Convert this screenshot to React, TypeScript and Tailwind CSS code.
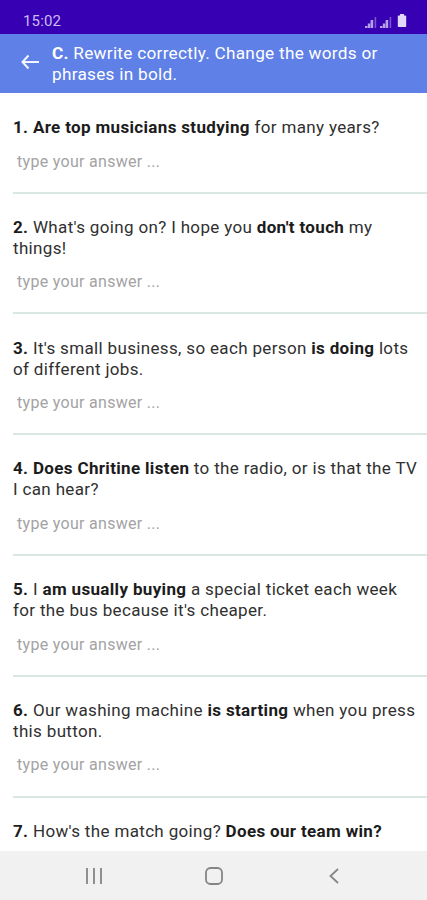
import type { ReactNode } from "react";

const questions: { id: number; lines: ReactNode[] }[] = [
  { id: 1, lines: [<><b className="font-bold">Are top musicians studying</b> for many years?</>] },
  { id: 2, lines: [<>What's going on? I hope you <b className="font-bold">don't touch</b> my</>, "things!"] },
  { id: 3, lines: [<>It's small business, so each person <b className="font-bold">is doing</b> lots</>, "of different jobs."] },
  { id: 4, lines: [<><b className="font-bold">Does Chritine listen</b> to the radio, or is that the TV</>, "I can hear?"] },
  { id: 5, lines: [<>I <b className="font-bold">am usually buying</b> a special ticket each week</>, "for the bus because it's cheaper."] },
  { id: 6, lines: [<>Our washing machine <b className="font-bold">is starting</b> when you press</>, "this button."] },
  { id: 7, lines: [<>How's the match going? <b className="font-bold">Does our team win?</b></>] },
];

function Signal() {
  return (
    <svg width="12" height="12" viewBox="0 0 12 12" fill="#cdbcf3">
      <path d="M0 10h2.4v2H0zM2.8 7.5h2.4V12H2.8zM5.6 4h2.6v8H5.6z" opacity=".85" />
      <path d="M9.6 1h1.6v11H9.6z" opacity=".45" />
    </svg>
  );
}

function StatusBar() {
  return (
    <div className="flex h-[34px] shrink-0 items-center justify-between bg-[#3700b3] pl-[23px] pr-5 pt-2 text-[#cdbcf3]">
      <span className="text-[15px] leading-5 tracking-[0.15px]">15:02</span>
      <div className="flex items-end gap-[3px]">
        <Signal />
        <Signal />
        <svg width="10" height="14" viewBox="0 0 10 14" className="ml-[2px]" fill="#e2d8fa">
          <path d="M3 0h4v1.5h1.4q.8 0 .8.8v10q0 .8-.8.8H1.6q-.8 0-.8-.8v-10q0-.8.8-.8H3z" />
        </svg>
      </div>
    </div>
  );
}

function Header() {
  return (
    <header className="flex h-[59px] shrink-0 items-center bg-[#5f80e6] pl-[21px] text-white">
      <svg width="19" height="16" viewBox="0 0 19 16" fill="none" stroke="#f3f5ff" strokeWidth="2" className="mb-[3px]">
        <path d="M18 8H1.5M7.5 1.5 1.5 8l6 6.5" />
      </svg>
      <h1 className="ml-3 whitespace-nowrap text-[17.2px] font-normal leading-[21px] tracking-[0.28px]">
        <b className="font-bold">C.</b> Rewrite correctly. Change the words or
        <br />
        phrases in bold.
      </h1>
    </header>
  );
}

export default function App() {
  return (
    <div className="flex h-[900px] w-[427px] flex-col overflow-hidden bg-white font-['Roboto',sans-serif]">
      <StatusBar />
      <Header />
      <main className="flex min-h-0 flex-1 flex-col overflow-hidden pl-[13px]">
        {questions.map((q, index) => (
          <section key={q.id} className="shrink-0 border-b-2 border-[#d9e7e4] pt-[23.1px] first:pt-[24px] last:border-b-0">
            <p className="whitespace-nowrap text-[17px] leading-[21px] tracking-[0.34px] text-[#303030]">
              <b className="font-bold text-[#1c1c1c]">{q.id}.</b>{" "}
              {q.lines.map((line, i) => (
                <span key={i} className="[&_b]:text-[#1c1c1c]">
                  {i > 0 && <br />}
                  {line}
                </span>
              ))}
            </p>
            {index < questions.length - 1 && (
              <div className="mt-[12.5px] h-[41.2px] pl-1 text-[16px] leading-[21px] tracking-[0.3px] text-[#a3a3a3]">
                type your answer ...
              </div>
            )}
          </section>
        ))}
      </main>
      <nav className="flex h-[49px] shrink-0 items-center justify-between bg-[#f1f1f1] pl-[86px] pr-[88px]">
        <svg width="17" height="16" viewBox="0 0 17 16" stroke="#858585" strokeWidth="1.8">
          <path d="M1 0v16M8 0v16M15 0v16" />
        </svg>
        <svg width="18" height="18" viewBox="0 0 18 18" fill="none" stroke="#858585" strokeWidth="1.8" className="-ml-[5px]">
          <rect x="1" y="1" width="16" height="16" rx="4.5" />
        </svg>
        <svg width="10" height="16" viewBox="0 0 10 16" fill="none" stroke="#858585" strokeWidth="1.8">
          <path d="M9 1 1.5 8 9 15" />
        </svg>
      </nav>
    </div>
  );
}
